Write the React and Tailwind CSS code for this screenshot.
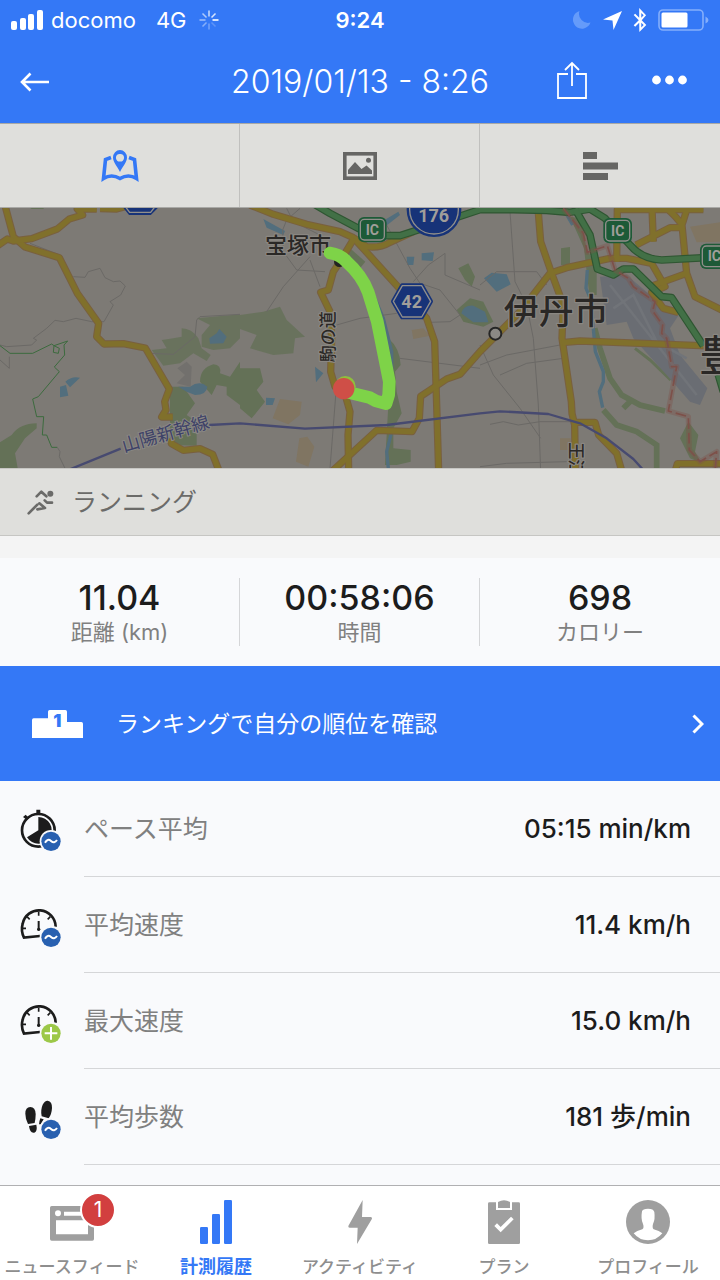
import React from 'react';
import { FaBluetoothB } from 'react-icons/fa';

const METRICS = [
  { icon: 'stopwatch', badge: 'avg', label: 'ペース平均', value: '05:15 min/km' },
  { icon: 'gauge', badge: 'avg', label: '平均速度', value: '11.4 km/h' },
  { icon: 'gauge', badge: 'max', label: '最大速度', value: '15.0 km/h' },
  { icon: 'steps', badge: 'avg', label: '平均歩数', value: '181 歩/min' },
];

const STATS = [
  { value: '11.04', label: '距離 (km)' },
  { value: '00:58:06', label: '時間' },
  { value: '698', label: 'カロリー' },
];

const StatusBar = () => (
  <div className="grid h-10 grid-cols-[1fr_auto_1fr] items-center px-[11px] text-[22px] leading-7">
    <div className="flex items-center">
      <svg className="h-5 w-8" viewBox="0 0 32 20" fill="currentColor">
        <rect x="0" y="11" width="6" height="9" rx="2" />
        <rect x="9" y="8" width="6" height="12" rx="2" />
        <rect x="17" y="4" width="6" height="16" rx="2" />
        <rect x="26" y="0" width="6" height="20" rx="2" />
      </svg>
      <span className="ml-2">docomo</span>
      <span className="ml-5">4G</span>
      <svg className="ml-3 h-5 w-5" viewBox="0 0 20 20" stroke="currentColor" strokeWidth="1.6">
        <path d="M13.5 10H19.5" />
        <path d="M12.5 7.5L16.5 3.5" opacity=".8" />
        <path d="M10 6.5V.5" opacity=".7" />
        <path d="M7.5 7.5L3.5 3.5" opacity=".6" />
        <path d="M6.5 10H.5" opacity=".5" />
        <path d="M7.5 12.5L3.5 16.5" opacity=".4" />
        <path d="M10 13.5V19.5" opacity=".3" />
        <path d="M12.5 12.5L16.5 16.5" opacity=".2" />
      </svg>
    </div>
    <span className="font-semibold">9:24</span>
    <div className="flex items-center justify-end">
      <svg className="h-[18px] w-[18px] text-[#659bfa]" viewBox="0 0 18 18" fill="currentColor">
        <path d="M6.5 0A9 9 0 1 0 17.5 11.5A9 9 0 0 1 6.5 0Z" />
      </svg>
      <svg className="ml-3 h-[19px] w-[19px]" viewBox="0 0 19 19" fill="currentColor">
        <path d="M19 0L10.5 19L9.5 9.5L0 8.5Z" />
      </svg>
      <FaBluetoothB className="ml-2 h-6 w-5" />
      <svg className="ml-2 h-[22px] w-[51px]" viewBox="0 0 51 22">
        <rect x="1" y="1" width="44" height="20" rx="4" fill="none" stroke="#84aefb" strokeWidth="1.6" />
        <rect x="3.5" y="3.5" width="26" height="15" rx="1.5" fill="#fff" />
        <path d="M47.5 7.5Q50.5 9 50.5 11T47.5 14.5Z" fill="#84aefb" />
      </svg>
    </div>
  </div>
);

const TitleBar = () => (
  <div className="grid h-[83px] grid-cols-[1fr_auto_1fr] items-center px-5">
    <div className="flex">
      <button type="button" aria-label="戻る">
        <svg className="h-5 w-[30px]" viewBox="0 0 30 20" fill="none" stroke="currentColor" strokeWidth="2.6">
          <path d="M29 10H2M10.5 1.5L2 10L10.5 18.5" />
        </svg>
      </button>
    </div>
    <h1 className="text-[32px] font-light leading-10">2019/01/13 - 8:26</h1>
    <div className="flex items-center justify-end gap-[65px] pb-1 pr-[13px]">
      <button type="button" aria-label="共有">
        <svg className="h-[38px] w-[30px]" viewBox="0 0 30 38" fill="none" stroke="currentColor" strokeWidth="1.8">
          <path d="M11 13H1V37H29V13H19M15 25V2.5M8 9L15 2L22 9" />
        </svg>
      </button>
      <button type="button" aria-label="メニュー">
        <svg className="h-[10px] w-[35px]" viewBox="0 0 35 10" fill="currentColor">
          <circle cx="4.5" cy="5" r="4.4" />
          <circle cx="17.5" cy="5" r="4.4" />
          <circle cx="30.5" cy="5" r="4.4" />
        </svg>
      </button>
    </div>
  </div>
);

const ViewTabs = () => (
  <div className="grid grid-cols-3 divide-x divide-[#c0c0be] border-y border-[#a9a9a6] bg-[#dfdfdc] text-[#666664]">
    <button type="button" aria-label="地図" className="flex h-[83px] items-center justify-center text-[#3478f6]">
      <svg className="h-8 w-[38px]" viewBox="0 0 38 32">
        <path d="M10 7.5L4.5 9.5L2.5 28.5Q10.5 23.5 19 28.5Q27.500 23.5 35.5 28.5L33.5 9.5L28 7.5" fill="none" stroke="currentColor" strokeWidth="3.6" />
        <path fillRule="evenodd" fill="currentColor" d="M19 22C16 16 12 12 12 7.5A7 7.5 0 0 1 26 7.5C26 12 22 16 19 22ZM19 4A3.5 3.8 0 1 0 19 11.5A3.5 3.8 0 1 0 19 4Z" />
      </svg>
    </button>
    <button type="button" aria-label="写真" className="flex h-[83px] items-center justify-center">
      <svg className="h-7 w-[34px]" viewBox="0 0 34 28">
        <rect x="1.8" y="1.8" width="30.4" height="24.4" fill="none" stroke="currentColor" strokeWidth="3.6" />
        <path d="M5 22V18L12 10L18.5 17L23.5 13.5L29 18.5V22Z" fill="currentColor" />
        <circle cx="25.5" cy="8.3" r="2.5" fill="currentColor" />
      </svg>
    </button>
    <button type="button" aria-label="ラップ" className="flex h-[83px] items-center justify-center">
      <svg className="h-7 w-[35px]" viewBox="0 0 35 28" fill="currentColor">
        <path d="M0 0H14V7H0ZM0 10.5H35V17.5H0ZM0 21H25V28H0Z" />
      </svg>
    </button>
  </div>
);

// Yellow trunk roads, drawn twice so that each gets a darker casing
const ROADS = [
  'M12 -10L40 95L75 126L178 158L232 265L296 355L290 395L312 417L370 416L436 429L508 552L494 590L498 615L485 636H518M512 700L514 716L550 736L600 731L638 748L658 800',
  'M-10 124L22 102L40 108L95 101L172 72L208 42L248 30L232 12H290M300 11L350 12L375 5',
  'M750 0L820 28L920 58L1020 80L1060 98L1100 125Q1140 130 1170 112L1240 80',
  'M1060 98L1180 230L1280 340L1304 410L1310 600L1316 800',
  'M1062 100L1020 170L1000 200L985 255L962 262L990 320L995 400L992 500L1005 545L1030 550L1050 620L1044 690L1046 800',
  'M995 800L1130 676L1236 680L1258 640L1262 574L1340 522L1380 508L1440 440L1480 400L1560 320L1650 205L1700 188L1830 160H1880L1955 175L1995 245L1955 262L1990 310L2035 322',
  'M1614 10L1622 110L1655 205L1690 300L1686 400L1714 590L1716 625L1724 660L1726 800',
  'M1686 413L1740 408L2160 424',
  'M1716 652H1785L1796 690L1850 745L1866 800',
  'M1850 170L1852 14H2110M1956 10L1960 110M1908 120L2010 68H2040M2000 10Q2030 35 2046 60L2060 15M2046 60L2060 205L2085 275L2165 315M1950 245L2060 205',
  'M2025 800L2032 776H2170',
];

const HIGHWAYS = [
  'M930 -10L990 25L1075 70L1130 92H1200L1300 60L1440 14H1540L1640 16L1710 22L1770 12L1815 40L1890 120Q1925 162 1985 165L2170 155',
  'M1725 12L1770 90L1792 192L1840 210L1870 192L1900 192L1985 275L2015 278L2110 422M2155 510L2170 560',
];

const BACK_STREETS = [
  'M220 215L255 217L265 200L300 190L315 218L340 230L360 228L376 243L362 270L330 290L340 300L312 350L275 350L228 340L190 350L165 346L140 370L100 400L110 405L95 420L20 425L0 420',
  'M450 445L520 448L585 395L590 345L600 335L720 328M90 115L180 150L210 210M0 465L28 490V455',
  'M900 10L860 45L848 75L850 140L890 195L975 200M800 320L850 245L930 155M930 165L960 245M1010 360L1080 340L1190 325M1008 560L990 790M1160 60L1230 190L1260 235L1320 255L1380 330L1350 350L1290 352',
  'M1240 230L1285 180L1335 145V210L1440 255M1530 20L1545 230L1580 300L1600 400L1615 600L1622 800M1440 480L1520 450L1680 420M1440 420L1480 510L1560 610L1622 700M1500 510L1580 475L1690 460',
  'M1440 240L1490 200L1610 200L1640 240M1470 658L1510 650L1555 660L1620 650L1720 650M1440 785L1520 775L1700 770M860 10L880 50L960 90M1200 460L1440 490M900 60L980 75',
];

const CITY_BORDER = 'M1690 10L1750 85L1762 142L1822 122L1845 195L1885 220L1900 245L1965 290L1958 318L1988 360L1985 385L2000 400L2015 485H2030L2005 618L2065 635L2068 735L2100 770L2150 740L2145 800';

const CityLabel = ({ x, y, size, children }) => (
  <text x={x} y={y} fontSize={size} fontWeight="500" fill="#2a2826" stroke="#8a8782" strokeWidth="7" strokeLinejoin="round" paintOrder="stroke">
    {children}
  </text>
);

const Interchange = ({ x, y }) => (
  <g transform={`translate(${x} ${y})`}>
    <rect x="-43" y="-38" width="86" height="76" rx="18" fill="#1d5a37" />
    <rect x="-36" y="-31" width="72" height="62" rx="12" fill="#1d5a37" stroke="#918f8b" strokeWidth="4" />
    <text textAnchor="middle" y="15" fontSize="42" fontWeight="700" fill="#a09e9a">IC</text>
  </g>
);

const RouteMap = () => (
  <svg
    role="img"
    aria-label="ルート"
    className="block h-[260px] w-full bg-[#7d7a75]"
    viewBox="0 9 2160 780"
    preserveAspectRatio="xMidYMid slice"
    fontFamily="Roboto, 'Noto Sans CJK JP', sans-serif"
  >
    {/* parks and hills */}
    <g fill="#647157">
      <path d="M455 435L500 430L485 405L520 400L545 395V370Q575 370 595 400L605 430L632 450L620 468L580 445L540 475L490 482Z" opacity=".8" />
      <path d="M590 340L720 328V400L690 430L640 435L605 425V390L630 360Z" opacity=".8" />
      <path d="M600 530Q600 490 640 478Q665 480 660 505L690 515L720 470V600L680 570V545L650 540L635 570Z" />
      <path d="M510 545L550 545L585 595L560 630L590 650V722L510 720Z" />
      <path d="M0 712L35 690Q60 655 110 655V670L75 700L45 745L55 800H0Z" />
      <path d="M85 5H135L130 12H95Z" />
      <path d="M720 330L790 320L840 305L860 345L915 395L885 400L880 445L820 450L750 430L770 390L720 372Z" opacity=".8" />
      <path d="M720 490H780L790 530L770 555L795 590L755 640L720 610Z" />
      <path d="M1050 130L1096 170L1080 190L1040 160Z" />
      <path d="M1375 190L1405 175L1425 215L1415 245L1395 225Z" />
      <path d="M1370 315L1410 280L1450 290L1480 350L1450 365L1390 350Z" />
      <path d="M1165 400Q1200 430 1202 480L1185 500L1190 560L1205 625L1180 670V730L1232 735V770L1190 780H1155L1165 600Z" />
      <path d="M1683 130L1710 126V180H1683Z" />
      <path d="M1710 35L1740 40L1760 130L1790 190V270H1768L1752 130Z" />
      <path d="M2040 700L2065 650L2095 690L2085 740L2105 775L2070 760Z" />
    </g>
    <g fill="none" stroke="#647157" strokeWidth="17">
      <path d="M1784 370L1800 430L1830 520L1865 570L1920 600L1995 618M1810 615L1850 660L1910 680L1970 720V800M1870 610L1895 585" />
      <path strokeWidth="9" d="M1905 430L1950 465L2012 525" />
    </g>
    {/* water */}
    <g fill="#526e7d">
      <path d="M180 545L198 540L205 572L180 577ZM196 530Q215 512 240 518L210 547Z" />
      <path d="M535 545L570 545Q600 525 622 545Q620 570 585 570L560 560Z" />
      <path d="M628 400L650 385L658 372L680 395L670 415L630 416Z" />
      <path d="M945 485L970 505L948 532ZM798 578L825 580L818 600H798ZM790 42L855 78L850 90L800 68Z" />
      <path d="M1220 155H1243L1240 180H1222ZM1265 145L1302 142L1298 168L1265 166ZM1145 50L1195 20L1200 30L1155 65Z" />
      <path d="M1384 325Q1390 300 1420 302L1455 320L1465 352L1420 352Z" />
      <path d="M1452 220L1475 203L1520 208L1532 238L1490 260Z" />
    </g>
    <path fill="none" stroke="#526e7d" strokeWidth="10" d="M1762 195L1758 250L1775 290L1780 370L1786 440L1810 500V530L1798 560L1808 608M1695 20L1718 60M1120 270L1150 340L1175 440V560M1175 680L1160 740L1166 800" />
    {/* airport and districts */}
    <path fill="#6a6d73" d="M1800 215L1880 210L1980 295L2035 332L2010 370L2040 450L2122 550L2100 600L2070 590L2000 510L1900 400L1880 350L1820 360Z" />
    <path fill="none" stroke="#717479" strokeWidth="8" d="M1830 240L2090 570M1840 310L1900 270L1970 410L2060 460" />
    <g fill="#807562">
      <path d="M840 582L905 590L900 630L865 658L818 640ZM898 700L922 695L943 725L925 785L888 770ZM1235 375L1270 370L1290 392L1240 402ZM1680 700H1712V735H1680ZM2070 65L2170 50V110L2090 112Z" />
      <path fill="#72706d" d="M532 490L560 470L575 485L572 545L530 535L555 510Z" />
    </g>
    <g fill="none" stroke="#6b6966" strokeWidth="3">
      {BACK_STREETS.map((d) => <path key={d} d={d} />)}
    </g>
    <path fill="none" stroke="#3c6b3e" strokeWidth="3" d="M0 422L30 445H98L155 417L162 422L203 408L192 420L194 450L163 486L178 500L115 575L98 582L110 635H131L127 690H140L155 727H172M162 422L160 442L175 445L178 430Z" />
    <path fill="none" stroke="#6b6966" strokeWidth="3" d="M172 727L180 740L178 755L196 792" />

    <g fill="none" strokeLinejoin="round">
      <g stroke="#79603f" strokeWidth="22">{ROADS.map((d) => <path key={d} d={d} />)}</g>
      <g stroke="#80702b" strokeWidth="16">{ROADS.map((d) => <path key={d} d={d} />)}</g>
      <g stroke="#2f5632" strokeWidth="23">{HIGHWAYS.map((d) => <path key={d} d={d} />)}</g>
      <g stroke="#427046" strokeWidth="16">{HIGHWAYS.map((d) => <path key={d} d={d} />)}</g>
      <g stroke="#7d5049">
        <path strokeWidth="16" opacity=".35" d={CITY_BORDER} />
        <path strokeWidth="5" strokeDasharray="32 12" d={CITY_BORDER} />
      </g>
      <path stroke="#474a70" strokeWidth="7" d="M205 795L362 731M628 660L720 655L915 671L1160 660L1440 625L1500 619L1645 627L1740 655L1820 700L1900 762L1930 795" />
    </g>

    <text transform="translate(372 742) rotate(-16)" fontSize="54" fill="#3e4268" stroke="#8a8884" strokeWidth="6" paintOrder="stroke">山陽新幹線</text>
    <CityLabel x="795" y="144" size="66">宝塚市</CityLabel>
    <g transform="translate(1002 472) rotate(-90)"><CityLabel x="0" y="0" size="51">駒の道</CityLabel></g>
    <circle cx="1486" cy="386" r="18" fill="#8b8985" stroke="#262626" strokeWidth="6" />
    <CityLabel x="1511" y="358" size="105">伊丹市</CityLabel>
    <CityLabel x="2098" y="498" size="126">豊</CityLabel>
    <g transform="translate(1711 712) rotate(90)"><CityLabel x="0" y="0" size="51">王江</CityLabel></g>

    <Interchange x={1117} y={74} />
    <Interchange x={1853} y={77} />
    <Interchange x={2143} y={154} />
    <g fill="#173378" stroke="#918f8b" strokeWidth="4">
      <path stroke="#173378" strokeWidth="12" d="M378 9L390 24H450L465 9Z" />
      <path d="M376 5L389 22H452L465 5" />
      <circle cx="1302" cy="14" r="78" stroke="#173378" strokeWidth="8" />
      <circle cx="1302" cy="14" r="73" />
      <path stroke="#173378" strokeWidth="14" strokeLinejoin="round" d="M1180 289L1207 242H1265L1292 289L1265 336H1207Z" />
      <path strokeLinejoin="round" d="M1180 289L1207 242H1265L1292 289L1265 336H1207Z" />
    </g>
    <g fill="#a09e9a" fontWeight="700" textAnchor="middle" fontSize="54">
      <text x="1301" y="52">176</text>
      <text x="1235" y="308">42</text>
    </g>

    {/* recorded track */}
    <circle cx="1018" cy="170" r="16" fill="#222" />
    <g fill="none" stroke="#7ed348" strokeLinecap="round" strokeLinejoin="round">
      <path strokeWidth="38" d="M990 144Q1020 148 1040 170Q1085 210 1104 260L1132 350L1152 450L1168 530L1166 570L1158 596L1128 588L1110 578L1045 562" />
    </g>
    <circle cx="1036" cy="544" r="31" fill="#8fbf3d" />
    <circle cx="1031" cy="551" r="32" fill="#cf4f47" />
  </svg>
);

const ActivityBar = () => (
  <div className="flex h-[68px] items-center border-y border-[#c6c6c3] bg-[#dfdfdc] pl-[27px] text-[#6b6b69]">
    <svg className="h-[26px] w-[27px]" viewBox="0 0 81 78" fill="none" stroke="currentColor" strokeWidth="8" strokeLinecap="round" strokeLinejoin="round">
      <circle cx="70" cy="14" r="9" fill="currentColor" stroke="none" />
      <path d="M29 22L43 8L58 22M75 41H60L53 34M5 73L31 47M37 43L54 57L31 61" />
    </svg>
    <h2 className="ml-[18px] text-[25px] leading-8">ランニング</h2>
  </div>
);

const Summary = () => (
  <dl className="mt-[22px] grid grid-cols-3 divide-x divide-[#d5d6d8] bg-[#f9fafc] py-5">
    {STATS.map((stat) => (
      <div key={stat.label} className="flex flex-col-reverse items-center">
        <dt className="text-[22px] leading-7 text-[#808080]">{stat.label}</dt>
        <dd className="text-[34px] font-medium leading-10 text-[#1c1c1c]">{stat.value}</dd>
      </div>
    ))}
  </dl>
);

const RankingLink = () => (
  <a href="#ranking" className="flex h-[115px] items-center bg-[#3478f6] pl-8 pr-4 text-white">
    <svg className="h-7 w-[51px]" viewBox="0 0 153 84">
      <path fill="currentColor" d="M0 84V30Q0 25 5 25H48V5Q48 0 53 0H100Q105 0 105 5V36H148Q153 36 153 41V84Z" />
      <text x="76" y="51" textAnchor="middle" fontSize="54" fontWeight="900" fill="#3478f6">1</text>
    </svg>
    <span className="ml-[33px] flex-1 text-[23px] leading-8">ランキングで自分の順位を確認</span>
    <svg className="h-5 w-3" viewBox="0 0 12 20" fill="none" stroke="currentColor" strokeWidth="3">
      <path d="M1.5 1.5L10 10L1.5 18.5" />
    </svg>
  </a>
);

const MetricIcon = ({ icon, badge }) => (
  <svg className="h-11 w-11 shrink-0" viewBox="0 0 132 132" aria-hidden="true">
    {icon === 'stopwatch' && (
      <g fill="#1c1c1c">
        <circle cx="61" cy="70" r="49" fill="none" stroke="#1c1c1c" strokeWidth="8" />
        <path d="M61 70V30A40 40 0 1 1 27 91Z" />
        <path d="M55 8H67V20H55ZM15 30L23 23L33 33L27 39Z" />
      </g>
    )}
    {icon === 'gauge' && (
      <g fill="none" stroke="#1c1c1c" strokeWidth="8">
        <path d="M66 99L18 104Q8 84 14 62A50 50 0 0 1 113 71" />
        <path strokeWidth="5" d="M62 26V38M14 76H24M27 41L35 49M97 41L89 49" />
        <path strokeWidth="6" d="M62 54V82" />
        <circle cx="62" cy="79" r="5" fill="#1c1c1c" stroke="none" />
      </g>
    )}
    {icon === 'steps' && (
      <g fill="#1c1c1c">
        <path d="M22 56Q22 36 37 36Q52 36 53 57Q53 72 50 84L30 87Q22 70 22 56Z" />
        <path d="M33 93L55 89Q59 108 49 113Q36 116 33 93Z" />
        <path d="M89 17Q103 20 102 39Q101 58 92 70L71 64Q67 45 74 29Q81 16 89 17Z" />
        <path d="M67 70L77 73L68 88H63Q64 78 67 70Z" />
      </g>
    )}
    <circle cx="99" cy="103" r="34" fill="#f9fafc" />
    <circle cx="99" cy="103" r="29" fill={badge === 'avg' ? '#2860b0' : '#9cc848'} />
    {badge === 'avg' ? (
      <path d="M81 107Q89 93 99 102T117 99" fill="none" stroke="#fff" strokeWidth="6" />
    ) : (
      <path d="M80 103H118M99 84V122" stroke="#fff" strokeWidth="6" />
    )}
  </svg>
);

const MetricList = () => (
  <dl className="bg-[#f9fafc]">
    {METRICS.map((metric) => (
      <div key={metric.label} className="flex h-24 items-center pl-[18px]">
        <MetricIcon icon={metric.icon} badge={metric.badge} />
        <div className="ml-[22px] flex h-full flex-1 items-center justify-between border-b border-[#d5d6d8] pr-[29px] leading-8">
          <dt className="text-[25px] text-[#808080]">{metric.label}</dt>
          <dd className="text-[26px] font-medium text-[#1c1c1c]">{metric.value}</dd>
        </div>
      </div>
    ))}
  </dl>
);

const NavItem = ({ label, active, count, children }) => (
  <a href="#" aria-current={active ? 'page' : undefined} className={`flex flex-col items-center pt-[14px] ${active ? 'text-[#3478f6]' : 'text-[#9f9f9f]'}`}>
    <span className="relative">
      <svg className="h-11 w-11" viewBox="0 0 132 132" fill="currentColor" aria-hidden="true">
        {children}
      </svg>
      {count && (
        <span className="absolute -top-2 left-[30px] flex h-9 w-9 items-center justify-center rounded-full border-2 border-white bg-[#d23f3f] text-[21px] leading-6 text-white">
          {count}
        </span>
      )}
    </span>
    <span className={`mt-[11px] whitespace-nowrap leading-6 ${active ? 'text-[18px] font-bold' : 'text-[17px] font-medium text-[#8e8e8e]'}`}>{label}</span>
  </a>
);

const BottomNav = () => (
  <nav className="sticky bottom-0 grid h-[95px] grid-cols-5 border-t border-[#b0b0b2] bg-white">
    <NavItem label="ニュースフィード" count={1}>
      <path fillRule="evenodd" d="M5 18H127Q132 18 132 23V117Q132 122 127 122H5Q0 122 0 117V23Q0 18 5 18ZM18 61V103H114V61ZM24 31A9 9 0 1 0 24 49A9 9 0 1 0 24 31ZM42 35V47H120V35Z" />
    </NavItem>
    <NavItem label="計測履歴" active>
      <rect x="18" y="81" width="24" height="51" rx="4" />
      <rect x="54" y="42" width="24" height="90" rx="4" />
      <rect x="90" y="0" width="24" height="132" rx="4" />
    </NavItem>
    <NavItem label="アクティビティ">
      <path d="M74 0L31 78Q30 83 35 83H59L57 132L102 56Q103 51 98 51H72Z" />
    </NavItem>
    <NavItem label="プラン">
      <path fillRule="evenodd" d="M22 7H42V30H90V7H110Q114 7 114 11V128Q114 132 110 132H22Q18 132 18 128V11Q18 7 22 7ZM37 78L56 97L95 58L87 50L56 81L45 70Z" />
      <path d="M48 24V6Q66 -4 84 6V24Z" />
    </NavItem>
    <NavItem label="プロフィール">
      <circle cx="66" cy="66" r="66" />
      <path fill="#fff" d="M48 34Q50 26 66 26Q83 26 85 36Q88 58 81 72Q78 84 83 88Q100 92 109 100Q92 121 66 121Q40 121 23 100Q32 92 49 88Q55 84 51 72Q44 58 48 34Z" />
    </NavItem>
  </nav>
);

const App = () => {
  return (
    <div className="flex min-h-screen flex-col bg-[#f9fafc] font-['Inter','Noto_Sans_CJK_JP',sans-serif]">
      <header className="bg-[#3478f6] text-white">
        <StatusBar />
        <TitleBar />
      </header>
      <main className="flex-1">
        <ViewTabs />
        <RouteMap />
        <div className="bg-[#f4f4f4]">
          <ActivityBar />
          <Summary />
        </div>
        <RankingLink />
        <MetricList />
      </main>
      <BottomNav />
    </div>
  );
};

export default App;
